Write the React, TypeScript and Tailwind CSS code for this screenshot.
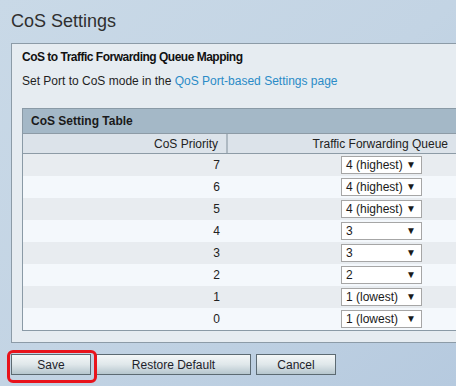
const rows = [
  { p: 7, q: "4 (highest)" },
  { p: 6, q: "4 (highest)" },
  { p: 5, q: "4 (highest)" },
  { p: 4, q: "3" },
  { p: 3, q: "3" },
  { p: 2, q: "2" },
  { p: 1, q: "1 (lowest)" },
  { p: 0, q: "1 (lowest)" },
];

function Select({ value }: { value: string }) {
  return (
    <div className="flex h-[18px] w-[81px] items-center justify-between border border-[#a6a6a6] bg-white pl-[4px] pr-[5px] text-[12px] leading-none text-[#1a1a1a]">
      <span>{value}</span>
      <span className="text-[10px]">▼</span>
    </div>
  );
}

function Button({ label, width }: { label: string; width: string }) {
  return (
    <button
      className={`${width} h-[21px] border border-[#5c6a72] bg-gradient-to-b from-[#f4f7f8] via-[#dfe7ea] to-[#b6c6ce] text-[12px] leading-none text-[#1e1e2a]`}
    >
      {label}
    </button>
  );
}

export default function App() {
  return (
    <div className="relative h-[386px] w-[456px] overflow-hidden bg-gradient-to-br from-[#c9d9e7] via-[#c3d4e4] to-[#b6cadf] font-['Liberation_Sans',Arial,sans-serif] text-[#222]">
      <div className="w-[800px] pl-[11px]">
        <h1 className="h-[43px] pt-[10px] text-[18px] leading-[22px] text-[#2f2f2f]">CoS Settings</h1>

        <div className="w-[700px] border border-r-0 border-[#8c9ba7] bg-[#e6ecf1] pb-[11px] pl-[10px]">
          <div className="pt-[5px] text-[12px] font-bold leading-[16px] tracking-[-0.5px] text-[#111]">
            CoS to Traffic Forwarding Queue Mapping
          </div>
          <div className="pt-[8px] text-[12px] leading-[16px] text-[#1f1f1f]">
            Set Port to CoS mode in the <span className="text-[#2a8bc7]">QoS Port-based Settings page</span>
          </div>

          <div className="mt-[19px] w-[650px] border border-r-0 border-[#8a9aa6] bg-[#f4f7fb]">
            <div className="flex h-[24px] items-center bg-[#a4b8c7] pl-[8px] text-[12px] font-bold text-[#1a1a1a]">
              CoS Setting Table
            </div>
            <div className="flex h-[21px] items-center border-y border-[#8d9ba6] bg-[#dce3ea] text-[12px] text-[#222]">
              <div className="flex h-full w-[205px] items-center justify-end border-r-2 border-[#aeb9c2] pr-[8px]">
                CoS Priority
              </div>
              <div className="w-[222px] pr-[2px] text-right">Traffic Forwarding Queue</div>
            </div>
            {rows.map((r, i) => (
              <div
                key={r.p}
                className={`flex h-[22px] items-center text-[12px] text-[#222] ${i % 2 === 0 ? "bg-[#e8ecf0]" : "bg-[#f4f8fc]"}`}
              >
                <div className="w-[205px] pr-[8px] text-right">{r.p}</div>
                <div className="ml-[113px]">
                  <Select value={r.q} />
                </div>
              </div>
            ))}
          </div>
        </div>

        <div className="mt-[11px] flex gap-[5px]">
          <Button label="Save" width="w-[80px]" />
          <Button label="Restore Default" width="w-[155px]" />
          <Button label="Cancel" width="w-[80px]" />
        </div>
      </div>

      <div className="absolute left-[7px] top-[350px] h-[33px] w-[90px] rounded-[6px] border-[3px] border-[#e8131b]" />
    </div>
  );
}
